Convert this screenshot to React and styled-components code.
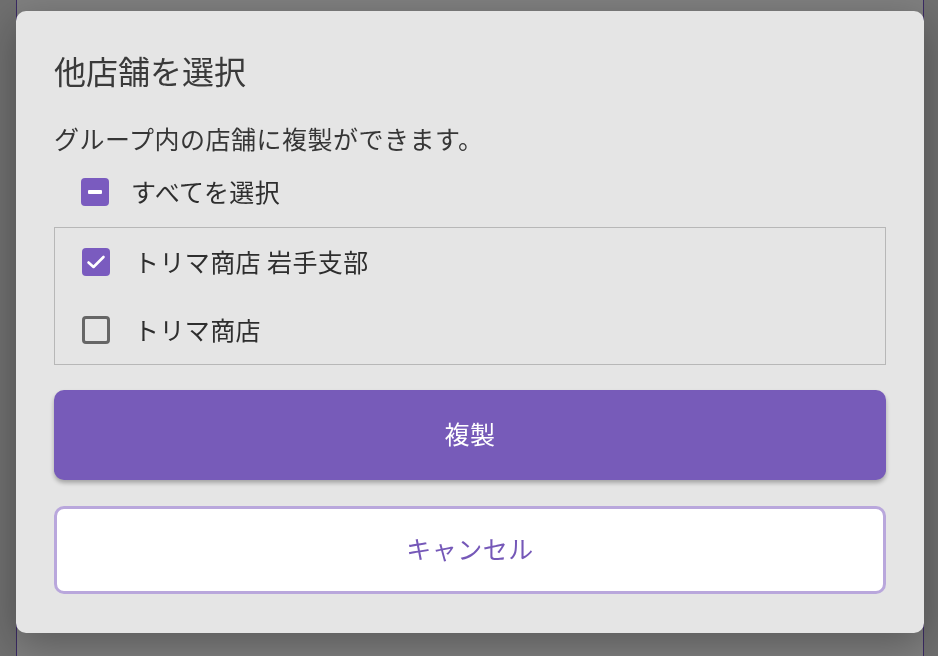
import React, { useState } from 'react';
import styled, { createGlobalStyle } from 'styled-components';

const GlobalStyle = createGlobalStyle`
  html, body {
    margin: 0;
    padding: 0;
    height: 656px;
    overflow: hidden;
    background: #dedede;
    font-family: "Noto Sans CJK JP", "Noto Sans", sans-serif;
  }
`

const Page = styled.div`
  height: 656px;
  display: flex;
  justify-content: center;
`

const Panel = styled.div`
  width: 906px;
  margin-left: 1px;
  background: #ffffff;
  border-left: 1px solid #7656c8;
  border-right: 1px solid #7656c8;
`

const Overlay = styled.div`
  position: fixed;
  inset: 0;
  background: rgba(0, 0, 0, 0.5);
  display: flex;
  justify-content: center;
  align-items: flex-start;
  padding-top: 11px;
  padding-left: 2px;
`

const Modal = styled.div`
  width: 908px;
  box-sizing: border-box;
  background: #e5e5e5;
  border-radius: 10px;
  padding: 39px 38px 39px;
  box-shadow: 0 12px 40px rgba(0, 0, 0, 0.3);
  display: flex;
  flex-direction: column;
  color: #333;
`

const Title = styled.h2`
  margin: 0;
  font-size: 32px;
  line-height: 40px;
  font-weight: 400;
  color: #3a3a3a;
`

const Description = styled.p`
  margin: 30px 0 0;
  font-size: 25px;
  letter-spacing: 0.5px;
  line-height: 36px;
  color: #363636;
`

const Row = styled.label`
  display: flex;
  align-items: center;
  gap: ${p => p.$gap}px;
  height: ${p => p.$height}px;
  padding-left: ${p => p.$indent}px;
  font-size: 25px;
  letter-spacing: 0.4px;
  color: #2e2e2e;
  cursor: pointer;

  & > span.label {
    padding-bottom: 2px;
  }
`

const SelectAllRow = styled(Row)`
  margin-top: 18px;
`

const StoreList = styled.div`
  margin-top: 17px;
  border: 1px solid #b7b7b7;
  display: flex;
  flex-direction: column;
`

const Box = styled.span`
  width: 28px;
  height: 28px;
  box-sizing: border-box;
  border-radius: 4px;
  flex-shrink: 0;
  display: flex;
  align-items: center;
  justify-content: center;
  background: ${p => (p.$on ? '#7a5bbf' : 'transparent')};
  border: ${p => (p.$on ? 'none' : '3px solid #666')};
`

const Button = styled.button`
  height: ${p => (p.$primary ? 90 : 88)}px;
  margin-top: ${p => (p.$primary ? 25 : 26)}px;
  padding: 0 0 5px;
  border-radius: 10px;
  font-family: inherit;
  font-size: 25px;
  letter-spacing: 0.5px;
  cursor: pointer;
  background: ${p => (p.$primary ? '#775bb9' : '#ffffff')};
  color: ${p => (p.$primary ? '#ffffff' : '#7558b8')};
  border: ${p => (p.$primary ? 'none' : '3px solid #b9a7dc')};
  box-shadow: ${p => (p.$primary ? '0 3px 4px rgba(0, 0, 0, 0.28)' : 'none')};
`

const Check = ({ state }) => (
  <Box $on={state !== 'off'}>
    {state === 'on' && (
      <svg width="20" height="16" viewBox="0 0 20 16">
        <path d="M2.5 8.5 L7.5 13 L17.5 3" fill="none" stroke="#fff" strokeWidth="2.6" strokeLinecap="round" strokeLinejoin="round" />
      </svg>
    )}
    {state === 'mixed' && (
      <svg width="18" height="6" viewBox="0 0 18 6">
        <rect x="2" y="1" width="14" height="4" rx="1" fill="#fff" />
      </svg>
    )}
  </Box>
)

const stores = [
  { id: 1, name: 'トリマ商店 岩手支部' },
  { id: 2, name: 'トリマ商店' },
]

const App = () => {
  const [selected, setSelected] = useState([1]);

  const toggle = id => {
    setSelected(s => (s.includes(id) ? s.filter(x => x !== id) : [...s, id]));
  }

  const allState = selected.length === 0 ? 'off' : selected.length === stores.length ? 'on' : 'mixed';

  return (
    <>
      <GlobalStyle />
      <Page>
        <Panel />
      </Page>
      <Overlay>
        <Modal>
          <Title>他店舗を選択</Title>
          <Description>グループ内の店舗に複製ができます。</Description>
          <SelectAllRow $height={36} $indent={27} $gap={22} onClick={() => setSelected(allState === 'on' ? [] : stores.map(s => s.id))}>
            <Check state={allState} />
            <span className="label">すべてを選択</span>
          </SelectAllRow>
          <StoreList>
            {stores.map(store =>
              <Row key={store.id} $height={68} $indent={27} $gap={24} onClick={() => toggle(store.id)}>
                <Check state={selected.includes(store.id) ? 'on' : 'off'} />
                <span className="label">{store.name}</span>
              </Row>
            )}
          </StoreList>
          <Button $primary>複製</Button>
          <Button>キャンセル</Button>
        </Modal>
      </Overlay>
    </>
  )
}

export default App
